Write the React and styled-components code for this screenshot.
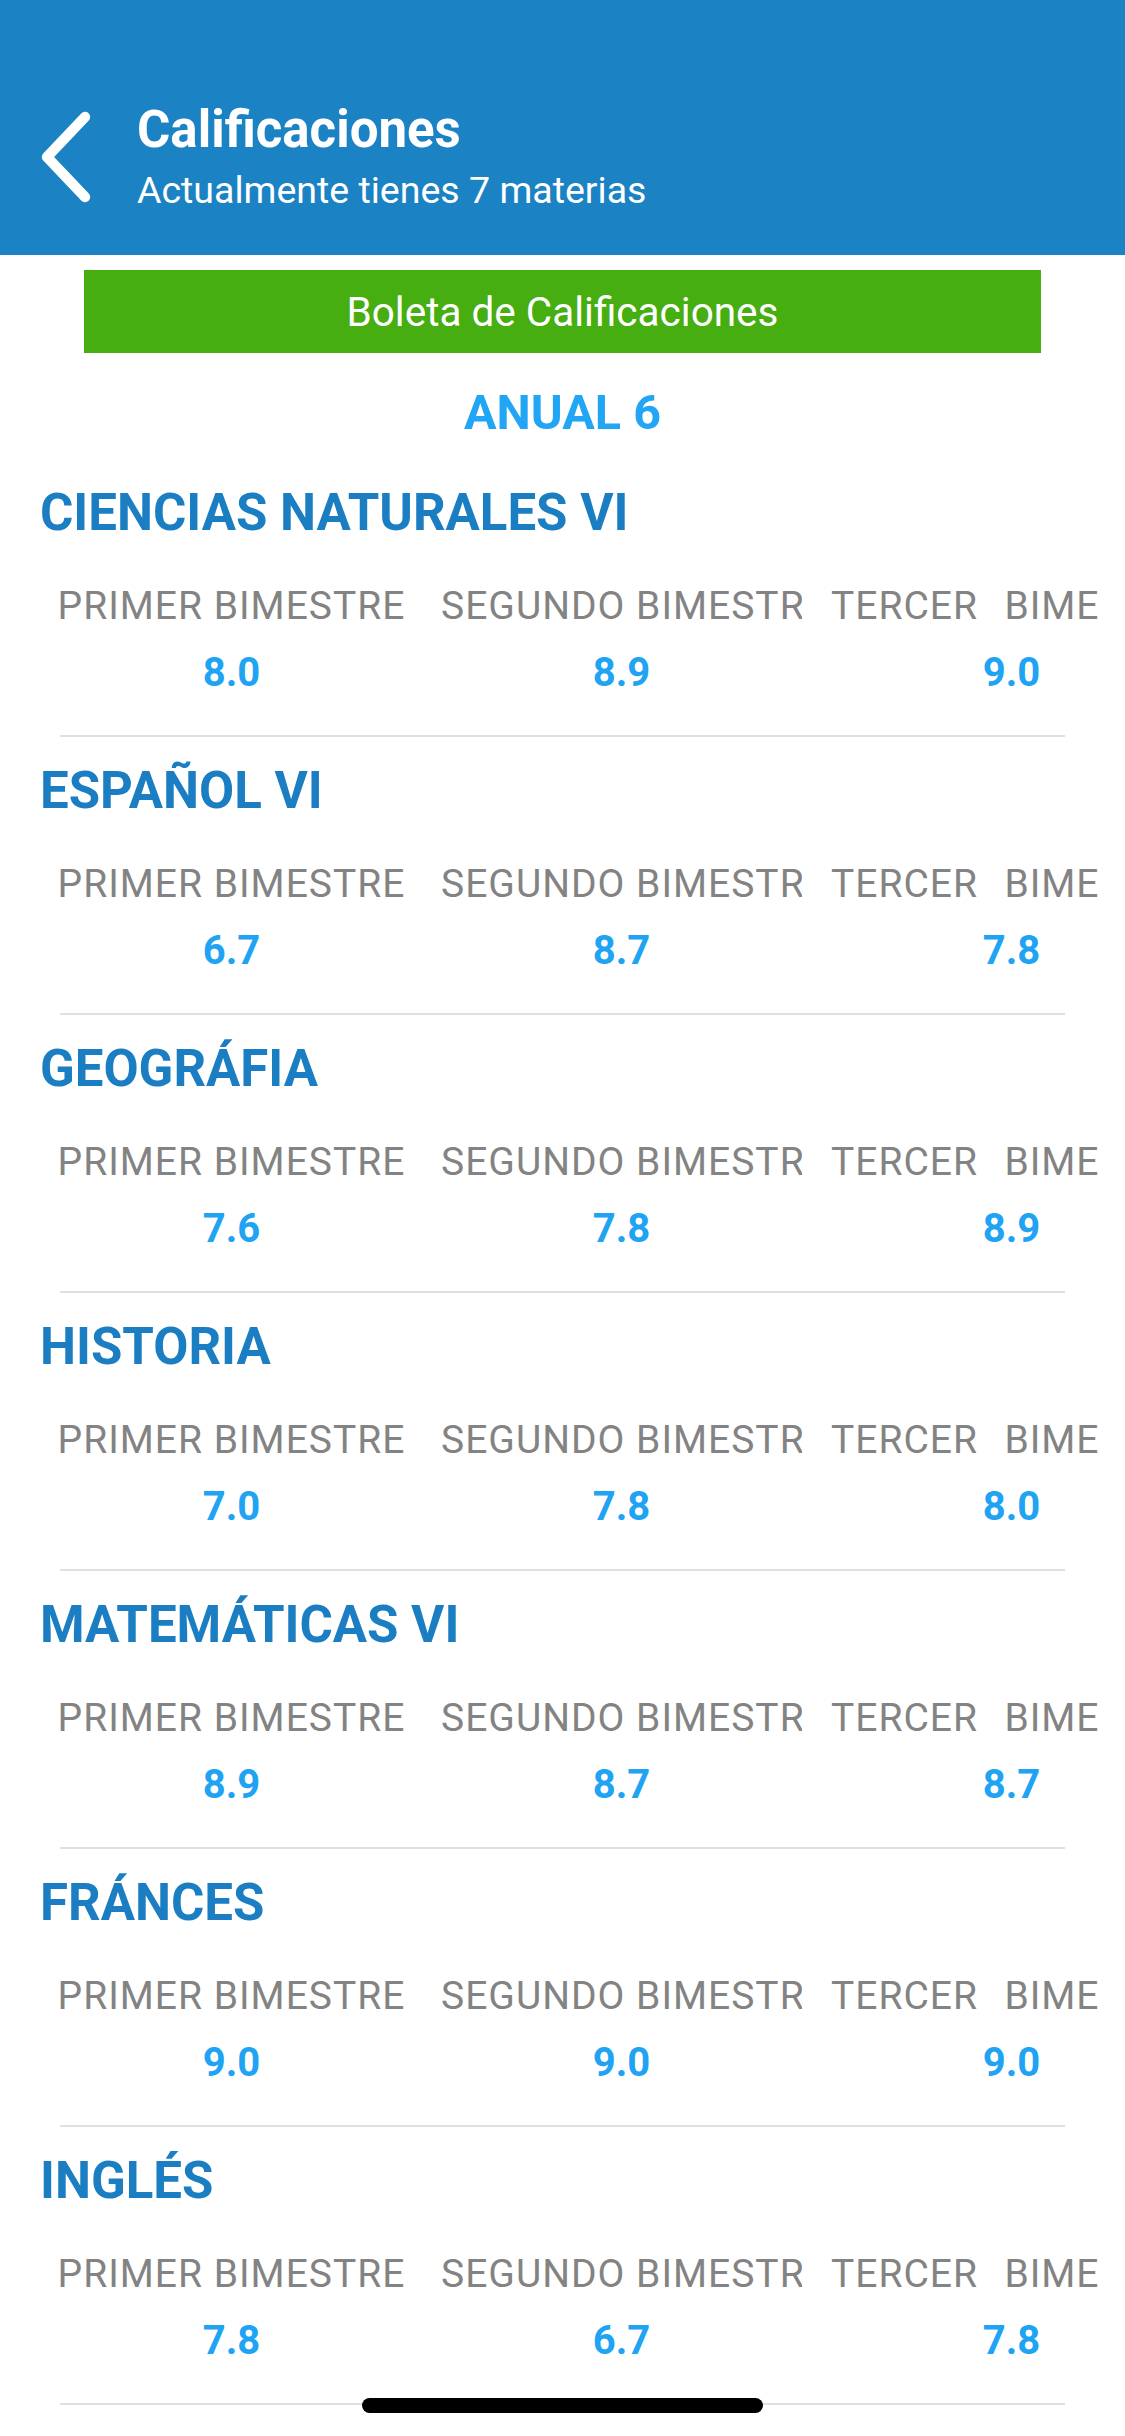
import React from 'react';
import styled, { createGlobalStyle } from 'styled-components';

const GlobalStyle = createGlobalStyle`
  html, body {
    margin: 0;
    padding: 0;
    background: #fff;
  }
  body {
    font-family: Roboto, "Liberation Sans", Arial, sans-serif;
    -webkit-font-smoothing: antialiased;
  }
  * { box-sizing: border-box; }
`;

const materias = [
  { nombre: 'CIENCIAS NATURALES VI', notas: ['8.0', '8.9', '9.0'] },
  { nombre: 'ESPAÑOL VI', notas: ['6.7', '8.7', '7.8'] },
  { nombre: 'GEOGRÁFIA', notas: ['7.6', '7.8', '8.9'] },
  { nombre: 'HISTORIA', notas: ['7.0', '7.8', '8.0'] },
  { nombre: 'MATEMÁTICAS VI', notas: ['8.9', '8.7', '8.7'] },
  { nombre: 'FRÁNCES', notas: ['9.0', '9.0', '9.0'] },
  { nombre: 'INGLÉS', notas: ['7.8', '6.7', '7.8'] },
];

const periodos = ['PRIMER BIMESTRE', 'SEGUNDO BIMESTRE', 'TERCER\u00A0\u00A0\u200ABIMESTRE'];

function BackIcon() {
  return (
    <svg width="60" height="96" viewBox="0 0 60 96" fill="none">
      <path d="M52 8 L14 48 L52 88" stroke="#fff" strokeWidth="10.5" strokeLinecap="round" strokeLinejoin="round" />
    </svg>
  );
}

export default function App() {
  return (
    <Screen>
      <GlobalStyle />
      <Header>
        <BackButton type="button">
          <BackIcon />
        </BackButton>
        <TitleBlock>
          <Title>Calificaciones</Title>
          <Subtitle>Actualmente tienes 7 materias</Subtitle>
        </TitleBlock>
      </Header>

      <BoletaButton type="button">Boleta de Calificaciones</BoletaButton>

      <Periodo>ANUAL 6</Periodo>

      {materias.map((m) => (
        <Materia key={m.nombre}>
          <MateriaNombre>{m.nombre}</MateriaNombre>
          <GradeRow>
            {periodos.map((p, i) => (
              <GradeColumn key={p}>
                <GradeLabel>{p}</GradeLabel>
                <GradeValue>{m.notas[i]}</GradeValue>
              </GradeColumn>
            ))}
          </GradeRow>
          <Divider />
        </Materia>
      ))}

      <HomeIndicator />
    </Screen>
  );
}

const Screen = styled.div`
  width: 1125px;
  min-height: 2436px;
  background: #fff;
  position: relative;
  overflow: hidden;
`;

const Header = styled.header`
  height: 255px;
  background: #1b82c4;
  display: flex;
  align-items: center;
  padding: 58px 0 0 33px;
`;

const BackButton = styled.button`
  background: none;
  border: none;
  padding: 0;
  width: 60px;
  height: 96px;
  display: flex;
  align-items: center;
  justify-content: center;
  cursor: pointer;
`;

const TitleBlock = styled.div`
  display: flex;
  flex-direction: column;
  margin-left: 44px;
  color: #fff;
`;

const Title = styled.h1`
  margin: 0;
  font-size: 51px;
  line-height: 60px;
  font-weight: 700;
`;

const Subtitle = styled.p`
  margin: 7px 0 0;
  font-size: 37.5px;
  line-height: 46px;
  font-weight: 400;
`;

const BoletaButton = styled.button`
  display: block;
  width: 957px;
  height: 83px;
  margin: 15px 0 0 84px;
  border: none;
  background: #46ae10;
  color: #fff;
  font-family: inherit;
  font-size: 40.5px;
  font-weight: 400;
  cursor: pointer;
`;

const Periodo = styled.div`
  margin-top: 30px;
  text-align: center;
  font-size: 48.5px;
  line-height: 60px;
  font-weight: 700;
  color: #22a5f5;
`;

const Materia = styled.section`
  padding-top: 24px;
  &:first-of-type { margin-top: 16px; }
`;

const MateriaNombre = styled.h2`
  margin: 0 0 40px 40px;
  font-size: 51px;
  line-height: 60px;
  font-weight: 700;
  color: #1b7ec2;
`;

const GradeRow = styled.div`
  display: flex;
  margin-left: 37px;
  width: 1062px;
  overflow: hidden;
`;

const GradeColumn = styled.div`
  flex: 0 0 390px;
  width: 390px;
  min-width: 0;
  padding: 0 15px 0 14px;
  display: flex;
  flex-direction: column;
  gap: 21px;
`;

const GradeLabel = styled.div`
  font-size: 39px;
  line-height: 46px;
  letter-spacing: 1px;
  color: #838383;
  white-space: nowrap;
  overflow: hidden;
  text-align: center;
`;

const GradeValue = styled.div`
  font-size: 40px;
  line-height: 46px;
  font-weight: 700;
  color: #20a3f3;
  text-align: center;
`;

const Divider = styled.hr`
  margin: 39px 60px 0;
  height: 2px;
  border: none;
  background: #e0e0e0;
`;

const HomeIndicator = styled.div`
  position: absolute;
  left: 362px;
  bottom: 23px;
  width: 401px;
  height: 15px;
  border-radius: 8px;
  background: #000;
`;
